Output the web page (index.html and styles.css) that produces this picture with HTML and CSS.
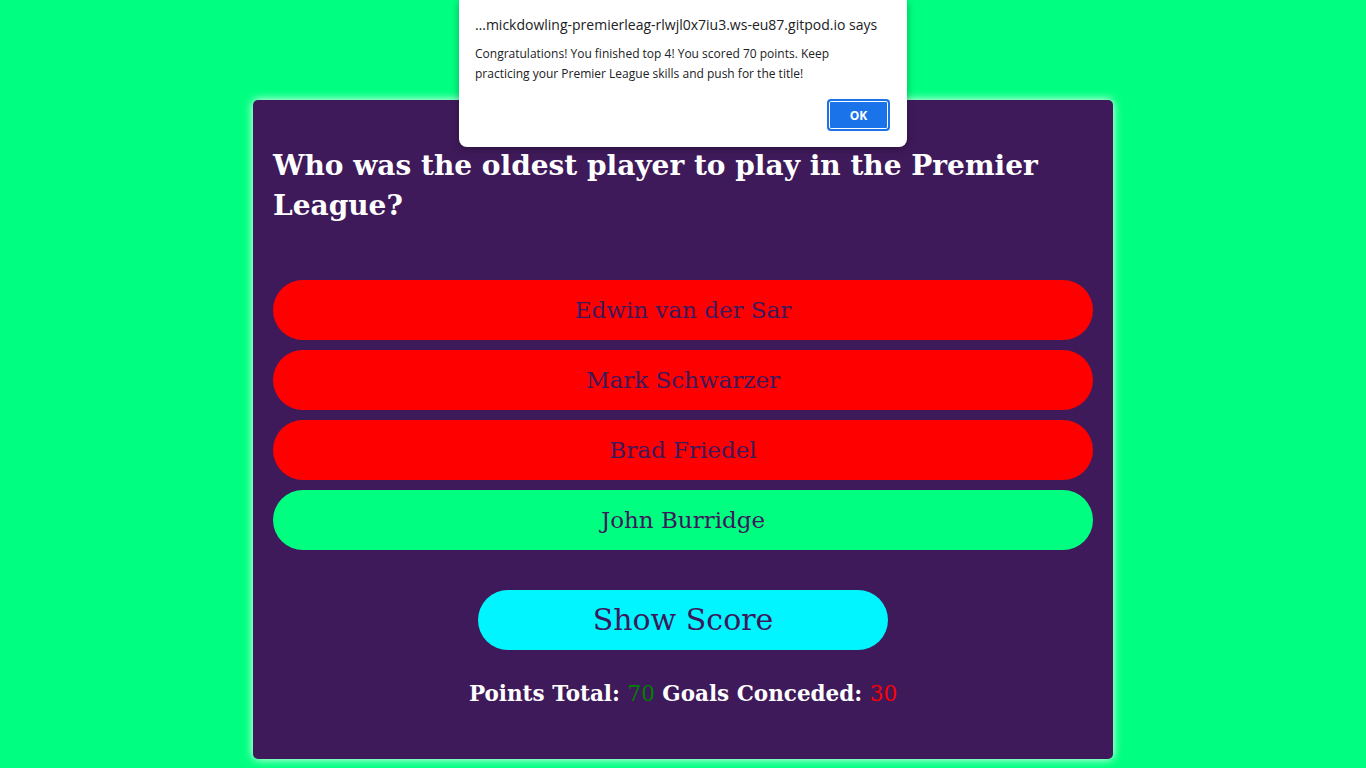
FILE: index.html
```html
<!DOCTYPE html>
<html lang="en">
<head>
<meta charset="utf-8">
<title>Premier League Quiz</title>
<link rel="stylesheet" href="styles.css">
</head>
<body>
<main class="quiz">
  <h2 class="question">Who was the oldest player to play in the Premier League?</h2>
  <div class="answers">
    <button class="answer wrong">Edwin van der Sar</button>
    <button class="answer wrong">Mark Schwarzer</button>
    <button class="answer wrong">Brad Friedel</button>
    <button class="answer right">John Burridge</button>
  </div>
  <div class="controls">
    <button class="show-score">Show Score</button>
  </div>
  <p class="score">Points Total: <span class="points">70</span> Goals Conceded: <span class="conceded">30</span></p>
</main>
<div class="dialog">
  <div class="dialog-title">…mickdowling-premierleag-rlwjl0x7iu3.ws-eu87.gitpod.io says</div>
  <div class="dialog-msg">Congratulations! You finished top 4! You scored 70 points. Keep practicing your Premier League skills and push for the title!</div>
  <div class="dialog-actions"><button class="ok">OK</button></div>
</div>
</body>
</html>
```
FILE: styles.css
```css
html, body {
  margin: 0;
  padding: 0;
}
body {
  background: #00ff80;
  font-family: "DejaVu Serif", "Liberation Serif", serif;
  min-height: 768px;
  overflow: hidden;
}
.quiz {
  width: 860px;
  box-sizing: border-box;
  margin: 100px auto 0;
  padding: 20px 20px 48px;
  background: #3f1a5a;
  border-radius: 5px;
  box-shadow: 0 0 10px #fff;
}
.question {
  margin: 26px 0 54px;
  color: #fff;
  font-size: 28px;
  line-height: 40px;
  font-weight: bold;
}
.answers {
  display: flex;
  flex-direction: column;
  gap: 10px;
}
.answer {
  height: 60px;
  border: none;
  border-radius: 30px;
  font-family: inherit;
  font-size: 23px;
  color: #3d195b;
  padding: 0;
}
.wrong { background: #ff0000; }
.right { background: #00ff80; }
.controls {
  display: flex;
  justify-content: center;
  margin-top: 40px;
}
.show-score {
  width: 410px;
  height: 60px;
  border: none;
  border-radius: 30px;
  background: #00f5ff;
  color: #3d195b;
  font-family: inherit;
  font-size: 30px;
  padding: 0 0 2px;
}
.score {
  margin: 27px 0 0;
  text-align: center;
  color: #fff;
  font-weight: bold;
  font-size: 21.5px;
  line-height: 34px;
}
.points { color: #008000; font-weight: normal; }
.conceded { color: #ff0000; font-weight: normal; }
.dialog {
  position: absolute;
  top: 0;
  left: 459px;
  width: 448px;
  height: 147px;
  box-sizing: border-box;
  background: #fff;
  border-radius: 0 0 8px 8px;
  box-shadow: 0 2px 8px rgba(0,0,0,0.3);
  padding: 16px 16px 0;
  font-family: "Open Sans", "Noto Sans", sans-serif;
  color: #202124;
}
.dialog-title {
  font-size: 14px;
  line-height: 18px;
}
.dialog-msg {
  margin-top: 10px;
  padding-right: 30px;
  font-size: 12px;
  line-height: 20px;
}
.dialog-actions {
  display: flex;
  justify-content: flex-end;
  margin-top: 15px;
}
.ok {
  width: 63px;
  height: 32px;
  margin-right: 1px;
  background: #1a73e8;
  color: #fff;
  border: 2px solid #1a73e8;
  box-shadow: inset 0 0 0 1px #fff;
  border-radius: 4px;
  font-family: inherit;
  font-weight: bold;
  font-size: 12px;
}
```
